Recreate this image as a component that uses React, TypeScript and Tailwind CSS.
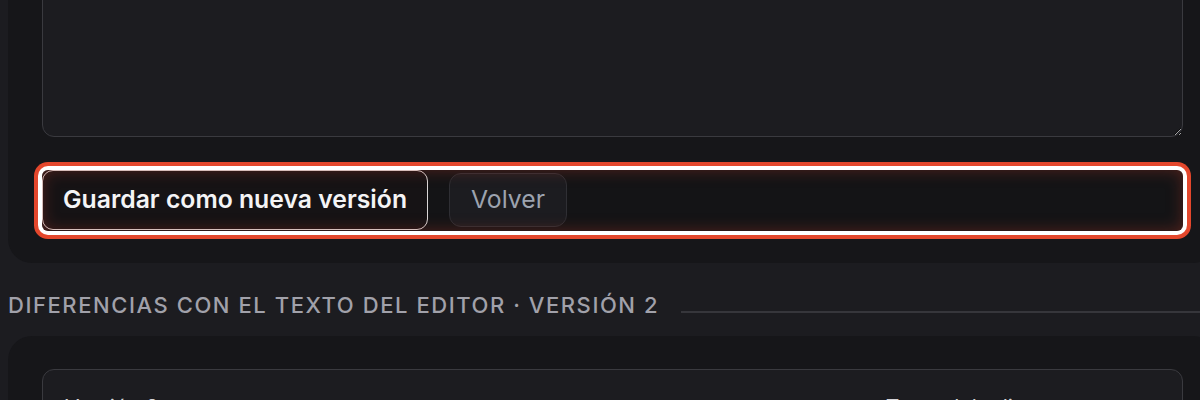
import React from 'react';

const App = () => {
  return (
    <div className="min-h-[400px] overflow-hidden bg-[#1c1c20] font-['Inter',sans-serif]">
      <div className="-mt-[60px] pl-[8px] w-[1217px]">
        {/* Editor card */}
        <section className="rounded-b-[24px] bg-[#161619] px-[34px] pt-[34px] pb-[32px]">
          <textarea
            className="block h-[163px] w-full rounded-[12px] border border-[#3a3a3f] bg-[#1c1c20] [color-scheme:dark] outline-none"
            defaultValue=""
          />

          {/* Actions, highlighted */}
          <div className="relative mt-[33px] flex h-[61px] items-start gap-[21px] rounded-[6px] bg-[#141416] shadow-[0_0_0_4px_#ffffff,0_0_0_8px_#e4472c]">
            <button className="flex h-[60px] items-center rounded-[11px] border border-[#d9d6d6] bg-[#161315] px-[20px] text-[24.75px] font-semibold text-[#f4f4f5]">
              Guardar como nueva versión
            </button>
            <button className="mt-[3px] flex h-[54px] items-center rounded-[12px] border border-[#2f2f34] bg-[#1c1c20] px-[21px] text-[24.75px] text-[#9ca3af]">
              Volver
            </button>
            <div className="pointer-events-none absolute inset-0 rounded-[6px] shadow-[inset_0_0_16px_rgba(200,60,40,0.35)]" />
          </div>
        </section>

        {/* Diff heading */}
        <div className="mt-[26px] flex items-baseline gap-[22px] pr-[17px]">
          <h2 className="text-[22px] leading-[1.5] font-medium uppercase tracking-[0.071em] text-[#a1a1aa]">
            Diferencias con el texto del editor · Versión 2
          </h2>
          <div className="h-[2px] flex-1 bg-[#36363b]" />
        </div>

        {/* Diff card */}
        <section className="mt-[14px] rounded-t-[24px] bg-[#161619] px-[34px] pt-[33px] pb-[34px]">
          <div className="flex justify-between rounded-[12px] border border-[#3a3a3f] bg-[#1c1c20] px-[22px] pt-[22px] pb-[20px] text-[21px] text-[#d4d4d8]">
            <span>Versión 2</span>
            <span className="pr-[120px]">Texto del editor</span>
          </div>
        </section>
      </div>
    </div>
  );
};

export default App;
